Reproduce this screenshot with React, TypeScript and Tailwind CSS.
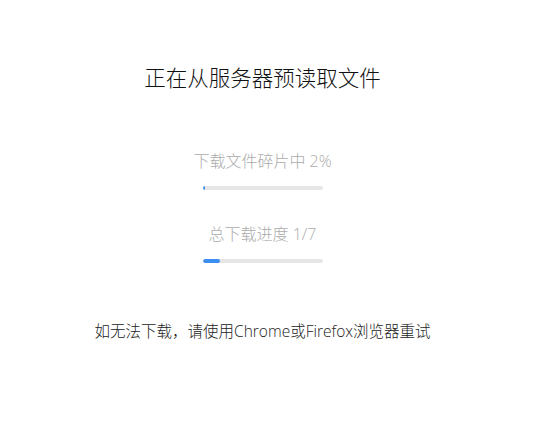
import React from 'react';

interface ProgressProps {
    label: string;
    percent: number;
}

const Progress: React.FC<ProgressProps> = ({ label, percent }) => (
    <div className="flex flex-col items-center">
        <p className="text-[16px] font-light leading-[22px] text-[#ababab]">{label}</p>
        <div className="mt-[14px] h-[4px] w-[120px] overflow-hidden rounded-full bg-[#e6e6e6]">
            <div className="h-full rounded-full bg-[#3c8ff0]" style={{ width: `${percent}%` }} />
        </div>
    </div>
);

const App: React.FC = () => {
    return (
        <div className="h-[423px] w-[555px] bg-white font-['Open_Sans','Noto_Sans_CJK_SC',sans-serif]">
            <div className="flex w-[525px] flex-col items-center pt-[64px]">
                <h1 className="text-[21.5px] font-light leading-[28px] text-[#111]">正在从服务器预读取文件</h1>
                <div className="mt-[58px]">
                    <Progress label="下载文件碎片中 2%" percent={2} />
                </div>
                <div className="mt-[33px]">
                    <Progress label="总下载进度 1/7" percent={100 / 7} />
                </div>
                <p className="mt-[57px] text-[15.5px] font-light leading-[22px] text-[#222]">
                    如无法下载，请使用Chrome或Firefox浏览器重试
                </p>
            </div>
        </div>
    );
};

export default App;
